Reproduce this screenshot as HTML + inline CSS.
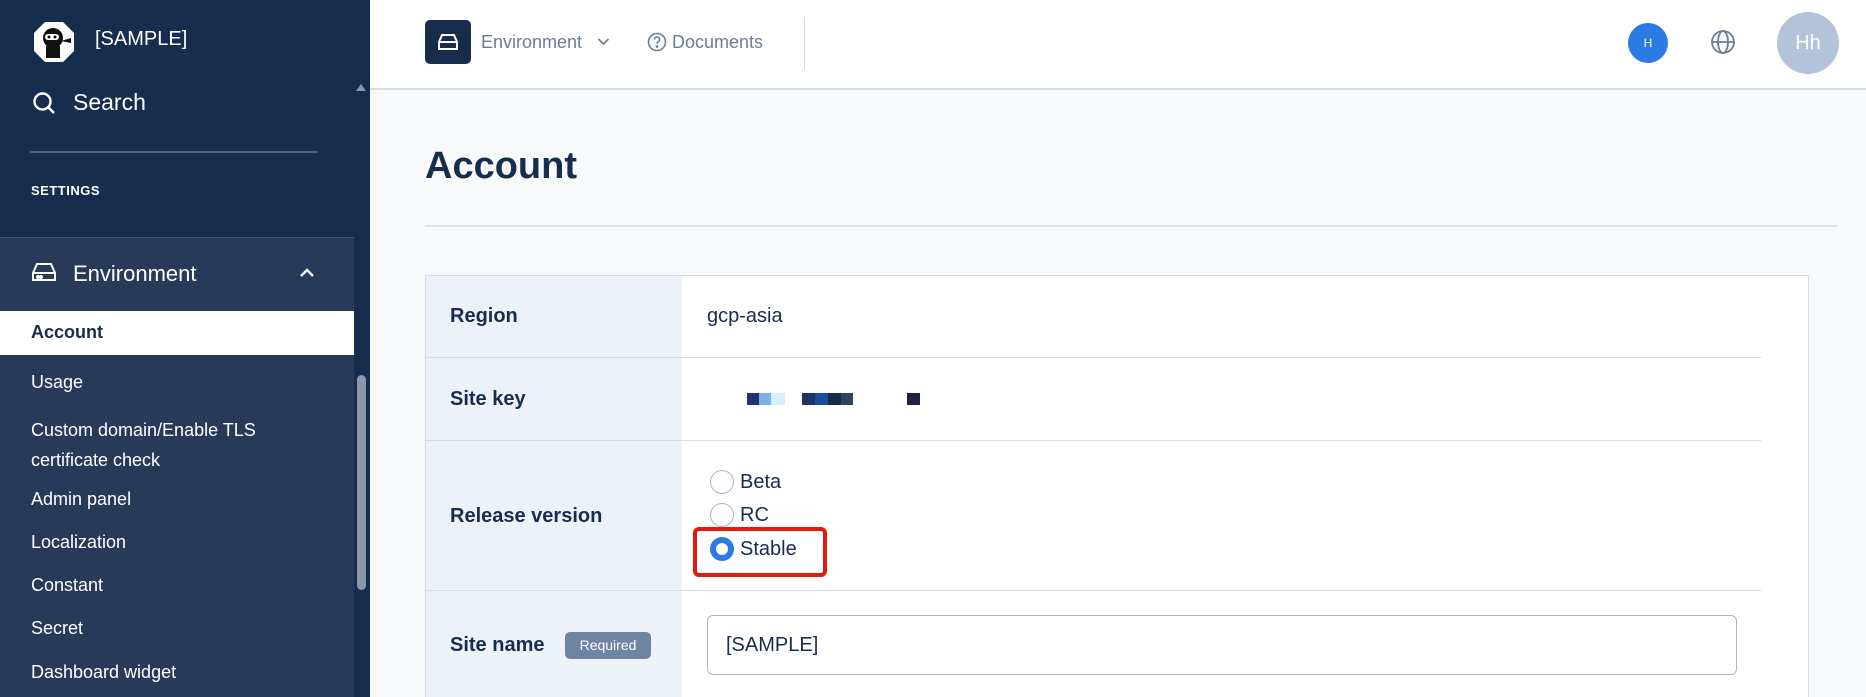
<!DOCTYPE html>
<html style="width:1866px;height:697px;overflow:hidden"><head><meta charset="utf-8"><style>
*{box-sizing:border-box;margin:0;padding:0}
body{width:1866px;height:697px;overflow:hidden;font-family:"Liberation Sans",sans-serif;background:#f8f9fb;position:relative}
.sb{position:absolute;left:0;top:0;width:370px;height:697px;background:#172d4d}
.a{position:absolute;white-space:nowrap}
.sub{color:#fff;font-size:18px;left:31px}
.lbl{position:absolute;left:450px;font-size:20px;font-weight:bold;color:#172d4d}
.hr{position:absolute;left:682px;width:1079px;height:1px;background:#d5dde8}
.radio{position:absolute;left:710px;width:24px;height:24px;border-radius:50%;border:1.5px solid #a9b6c8;background:#fff}
.rt{position:absolute;left:740px;font-size:20px;color:#172d4d}
</style></head><body>
<div class="sb">
  <svg class="a" style="left:33px;top:21px" width="42" height="42" viewBox="0 0 42 42"><polygon points="12,1 30,1 41,12 41,30 30,41 12,41 1,30 1,12" fill="#fff"/><circle cx="20" cy="17" r="10" fill="#111"/><rect x="12" y="13" width="14" height="6" rx="3" fill="#fff"/><circle cx="16" cy="16" r="1.5" fill="#111"/><circle cx="22" cy="16" r="1.5" fill="#111"/><rect x="13" y="25" width="14" height="12" fill="#111"/><path d="M28 20 L38 17 L38 22 Z" fill="#111"/></svg>
  <div class="a" style="left:95px;top:28px;font-size:20px;color:#fff">[SAMPLE]</div>
  <svg class="a" style="left:32px;top:91px" width="24" height="24" viewBox="0 0 24 24" fill="none" stroke="#fff" stroke-width="2.4"><circle cx="10.5" cy="10.5" r="8"/><path d="M16.5 16.5 L22 22"/></svg>
  <div class="a" style="left:73px;top:89px;font-size:23px;color:#fff">Search</div>
  <div class="a" style="left:30px;top:151px;width:288px;height:2px;background:#4d6282"></div>
  <div class="a" style="left:31px;top:183px;font-size:13px;font-weight:bold;color:#fff;letter-spacing:.5px">SETTINGS</div>
  <div class="a" style="left:0;top:237px;width:354px;height:460px;background:#273b59;border-top:1px solid #3c5273"></div>
  <svg class="a" style="left:31px;top:261px" width="26" height="22" viewBox="0 0 26 22" fill="none" stroke="#fff" stroke-width="2"><path d="M2 12 L6 3 H20 L24 12 V19 H2 Z M2 12 H24"/><circle cx="7" cy="16" r="1" fill="#fff"/><circle cx="10" cy="16" r="1" fill="#fff"/></svg>
  <div class="a" style="left:73px;top:261px;font-size:22px;color:#fff">Environment</div>
  <svg class="a" style="left:299px;top:268px" width="16" height="10" viewBox="0 0 16 10" fill="none" stroke="#fff" stroke-width="2.4"><path d="M2 8 L8 2 L14 8"/></svg>
  <div class="a" style="left:0;top:311px;width:354px;height:44px;background:#fff"></div>
  <div class="a" style="left:31px;top:322px;font-size:18px;font-weight:bold;color:#172d4d">Account</div>
  <div class="a sub" style="top:372px">Usage</div>
  <div class="a sub" style="top:415px;line-height:30px">Custom domain/Enable TLS<br>certificate check</div>
  <div class="a sub" style="top:489px">Admin panel</div>
  <div class="a sub" style="top:532px">Localization</div>
  <div class="a sub" style="top:575px">Constant</div>
  <div class="a sub" style="top:618px">Secret</div>
  <div class="a sub" style="top:662px">Dashboard widget</div>
  <div class="a" style="left:357px;top:375px;width:9px;height:215px;border-radius:5px;background:#8a98aa"></div>
  <div class="a" style="left:356px;top:84px;width:0;height:0;border-left:5px solid transparent;border-right:5px solid transparent;border-bottom:7px solid #8a98aa"></div>
</div>
<div class="a" style="left:370px;top:0;width:1496px;height:90px;background:#fff;border-bottom:2px solid #d5dde8"></div>
<div class="a" style="left:425px;top:20px;width:46px;height:44px;border-radius:5px;background:#172d4d"></div>
<svg class="a" style="left:437px;top:33px" width="22" height="18" viewBox="0 0 22 18" fill="none" stroke="#fff" stroke-width="2"><path d="M2 9 L5 2 H17 L20 9 V16 H2 Z M2 9 H20"/></svg>
<div class="a" style="left:481px;top:32px;font-size:18px;color:#6b7d96">Environment</div>
<svg class="a" style="left:597px;top:37px" width="13" height="9" viewBox="0 0 13 9" fill="none" stroke="#6b7d96" stroke-width="1.6"><path d="M1.5 2 L6.5 7 L11.5 2"/></svg>
<svg class="a" style="left:647px;top:32px" width="20" height="20" viewBox="0 0 20 20" fill="none" stroke="#6b7d96" stroke-width="1.6"><circle cx="10" cy="10" r="8.5"/><path d="M7.5 7.5 a2.5 2.5 0 1 1 3.5 2.3 c-.8.4-1 1-1 1.9"/><circle cx="10" cy="14.5" r=".6" fill="#6b7d96"/></svg>
<div class="a" style="left:672px;top:32px;font-size:18px;color:#6b7d96">Documents</div>
<div class="a" style="left:804px;top:17px;width:1px;height:52px;background:#d5dde8"></div>
<div class="a" style="left:1628px;top:23px;width:40px;height:40px;border-radius:50%;background:#2c7be5;color:#fff;font-size:12px;text-align:center;line-height:40px">H</div>
<svg class="a" style="left:1710px;top:29px" width="26" height="26" viewBox="0 0 26 26" fill="none" stroke="#6b7d96" stroke-width="1.8"><circle cx="13" cy="13" r="11"/><ellipse cx="13" cy="13" rx="5" ry="11"/><path d="M2 13 H24"/></svg>
<div class="a" style="left:1777px;top:12px;width:62px;height:62px;border-radius:50%;background:#b3c3d9;color:#fff;font-size:20px;text-align:center;line-height:62px">Hh</div>
<div class="a" style="left:425px;top:145px;font-size:38px;font-weight:bold;color:#172d4d">Account</div>
<div class="a" style="left:425px;top:225px;width:1413px;height:2px;background:#d9e1ea"></div>
<div class="a" style="left:425px;top:275px;width:1384px;height:422px;background:#fff;border:1.5px solid #d5dde8;border-bottom:none"></div>
<div class="a" style="left:426px;top:276px;width:256px;height:421px;background:#edf2f8"></div>
<div class="hr" style="left:426px;width:1335px;top:357px"></div>
<div class="hr" style="left:426px;width:1335px;top:440px"></div>
<div class="hr" style="left:426px;width:1335px;top:590px"></div>
<div class="lbl" style="top:305px">Region</div>
<div class="a" style="left:707px;top:305px;font-size:20px;color:#172d4d">gcp-asia</div>
<div class="lbl" style="top:388px">Site key</div>
<div class="a" style="left:747px;top:393px;width:12px;height:12px;background:#1f3470"></div>
<div class="a" style="left:759px;top:393px;width:12px;height:12px;background:#7cb0ea"></div>
<div class="a" style="left:771px;top:393px;width:14px;height:12px;background:#d6f0fb"></div>
<div class="a" style="left:802px;top:393px;width:13px;height:12px;background:#1e3366"></div>
<div class="a" style="left:815px;top:393px;width:13px;height:12px;background:#1b4e9a"></div>
<div class="a" style="left:828px;top:393px;width:13px;height:12px;background:#1a2a4a"></div>
<div class="a" style="left:841px;top:393px;width:12px;height:12px;background:#2d4460"></div>
<div class="a" style="left:907px;top:393px;width:13px;height:12px;background:#1e2244"></div>
<div class="lbl" style="top:505px">Release version</div>
<div class="radio" style="top:470px"></div><div class="rt" style="top:471px">Beta</div>
<div class="radio" style="top:503px"></div><div class="rt" style="top:504px">RC</div>
<div class="a" style="left:693px;top:527px;width:134px;height:50px;border:4px solid #e2190f;border-radius:6px"></div>
<div class="radio" style="top:537px;border:6px solid #2c7be5"></div><div class="rt" style="top:538px">Stable</div>
<div class="lbl" style="top:634px">Site name</div>
<div class="a" style="left:565px;top:632px;width:86px;height:27px;border-radius:5px;background:#6e84a3;color:#fff;font-size:14px;text-align:center;line-height:27px">Required</div>
<div class="a" style="left:707px;top:615px;width:1030px;height:60px;border:1.5px solid #a9b6c8;border-radius:6px;background:#fff"></div>
<div class="a" style="left:726px;top:634px;font-size:20px;color:#172d4d">[SAMPLE]</div>
</body></html>
